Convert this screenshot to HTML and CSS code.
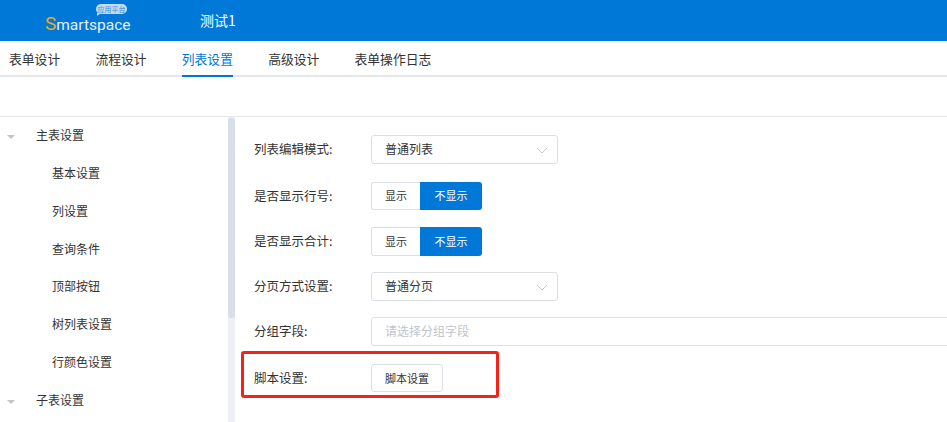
FILE: index.html
```html
<!DOCTYPE html>
<html>
<head>
    <title>Smartspace</title>
    <meta charset="UTF-8">
    <link rel="stylesheet" href="styles.css">
</head>
<body>
    <div class="header">
        <div class="logo">
            <span class="logo-text"><span class="logo-s">S</span>martspace</span>
            <span class="logo-badge">应用平台</span>
        </div>
        <div class="app-name">测试1</div>
    </div>

    <div class="tabs">
        <div class="tab">表单设计</div>
        <div class="tab">流程设计</div>
        <div class="tab active">列表设置</div>
        <div class="tab">高级设计</div>
        <div class="tab">表单操作日志</div>
    </div>

    <div class="toolbar"></div>

    <div class="main">
        <div class="sidebar">
            <div class="tree">
                <div class="tree-group"><span class="caret"></span>主表设置</div>
                <div class="tree-item">基本设置</div>
                <div class="tree-item">列设置</div>
                <div class="tree-item">查询条件</div>
                <div class="tree-item">顶部按钮</div>
                <div class="tree-item">树列表设置</div>
                <div class="tree-item">行颜色设置</div>
                <div class="tree-group"><span class="caret"></span>子表设置</div>
            </div>
            <div class="scrollbar"><div class="scrollbar-thumb"></div></div>
        </div>

        <div class="form">
            <div class="form-row gap-lg">
                <label class="form-label">列表编辑模式:</label>
                <div class="select">普通列表
                    <svg class="select-arrow" width="12" height="7" viewBox="0 0 12 7"><path d="M1 1l5 5 5-5" fill="none" stroke="#c4c9d2" stroke-width="1"/></svg>
                </div>
            </div>
            <div class="form-row gap-md">
                <label class="form-label">是否显示行号:</label>
                <div class="toggle">
                    <button class="toggle-btn">显示</button>
                    <button class="toggle-btn on">不显示</button>
                </div>
            </div>
            <div class="form-row">
                <label class="form-label">是否显示合计:</label>
                <div class="toggle tall">
                    <button class="toggle-btn">显示</button>
                    <button class="toggle-btn on">不显示</button>
                </div>
            </div>
            <div class="form-row">
                <label class="form-label">分页方式设置:</label>
                <div class="select">普通分页
                    <svg class="select-arrow" width="12" height="7" viewBox="0 0 12 7"><path d="M1 1l5 5 5-5" fill="none" stroke="#c4c9d2" stroke-width="1"/></svg>
                </div>
            </div>
            <div class="form-row gap-lg">
                <label class="form-label">分组字段:</label>
                <div class="text-input">请选择分组字段</div>
            </div>
            <div class="form-row">
                <label class="form-label">脚本设置:</label>
                <button class="plain-btn">脚本设置</button>
            </div>
            <div class="highlight"></div>
        </div>
    </div>
</body>
</html>
```

FILE: styles.css
```css
* {
    box-sizing: border-box;
}

html,
body {
    height: 100%;
}

body {
    margin: 0;
    overflow: hidden;
    background-color: #fff;
    color: #333;
    font-family: "Noto Sans CJK SC", "Noto Sans", sans-serif;
    font-size: 12px;
}

/* Header */
.header {
    display: flex;
    align-items: center;
    height: 41px;
    background-color: #0078d7;
    color: #fff;
}

.logo {
    position: relative;
    width: 200px;
    height: 41px;
    padding: 14px 0 0 45px;
}

.logo-text {
    display: block;
    color: #e6f1fb;
    font-family: Roboto, sans-serif;
    font-size: 15.5px;
    line-height: 19px;
}

.logo-s {
    color: #e8ac1c;
    font-size: 19px;
}

.logo-badge {
    position: absolute;
    top: 4px;
    left: 96px;
    width: 31px;
    height: 10px;
    border-radius: 5px;
    background-color: #c4dcf3;
    color: #3f8dd8;
    font-size: 7px;
    line-height: 10px;
    text-align: center;
}

/* little tail under the badge */
.logo-badge::after {
    content: "";
    position: absolute;
    top: 9px;
    left: 1px;
    border-style: solid;
    border-width: 3px 4px 0 0;
    border-color: #c4dcf3 transparent transparent;
}

.app-name {
    margin-top: -1px;
    font-size: 14px;
}

/* Tabs */
.tabs {
    display: flex;
    height: 36px;
    padding-left: 9px;
    border-bottom: 2px solid #e4e7ed;
}

.tab {
    height: 36px;
    margin-right: 35.2px;
    font-size: 12.8px;
    line-height: 35px;
    color: #333;
}

.tab.active {
    color: #0078d7;
    border-bottom: 2px solid #0078d7;
}

.toolbar {
    height: 40px;
    border-bottom: 1px solid #e4e7ed;
}

/* Main */
.main {
    display: flex;
    height: 305px;
}

.sidebar {
    display: flex;
    flex-shrink: 0;
    width: 235px;
}

.tree {
    flex: 1;
}

.tree-group {
    position: relative;
    height: 38px;
    padding-left: 36px;
    line-height: 36px;
}

.tree-item {
    height: 37.8px;
    padding-left: 52px;
    line-height: 36px;
}

.caret {
    position: absolute;
    top: 18px;
    left: 7px;
    border-style: solid;
    border-width: 4px 4px 0;
    border-color: #c0c4cc transparent transparent;
}

.scrollbar {
    width: 7px;
    background-color: #eef0f5;
}

.scrollbar-thumb {
    height: 200px;
    margin-top: 1px;
    border-radius: 3px;
    background-color: #d9dee9;
}

/* Form */
.form {
    position: relative;
    flex: 1;
    padding: 18px 0 0 19px;
}

.form-row {
    display: flex;
    align-items: center;
    height: 29px;
    margin-bottom: 16px;
}

.form-row.gap-md {
    margin-bottom: 16.5px;
}

.form-row.gap-lg {
    margin-bottom: 17.5px;
}

.form-label {
    flex-shrink: 0;
    width: 117px;
    margin-top: -2px;
    font-size: 12.5px;
}

.select {
    position: relative;
    width: 187px;
    height: 29px;
    padding-left: 13px;
    border: 1px solid #dcdfe6;
    border-radius: 3px;
    line-height: 25px;
}

.select-arrow {
    position: absolute;
    top: 11px;
    right: 9px;
}

.toggle {
    display: flex;
    height: 28px;
}

.toggle.tall {
    height: 29px;
}

.toggle-btn {
    width: 49px;
    height: 100%;
    padding: 0 0 2px;
    border: 1px solid #dcdfe6;
    border-right: none;
    border-radius: 3px 0 0 3px;
    background-color: #fff;
    color: #333;
    font-family: inherit;
    font-size: 11px;
}

.toggle-btn.on {
    width: 62px;
    border: none;
    border-radius: 0 3px 3px 0;
    background-color: #0078d7;
    color: #fff;
}

.text-input {
    flex: 1;
    height: 29px;
    margin-right: -4px;
    padding-left: 13px;
    border: 1px solid #dcdfe6;
    border-radius: 3px;
    color: #c0c4cc;
    line-height: 25px;
}

.plain-btn {
    width: 72px;
    height: 28px;
    padding: 0 0 1px;
    border: 1px solid #dcdfe6;
    border-radius: 3px;
    background-color: #fff;
    color: #333;
    font-family: inherit;
    font-size: 11px;
}

/* Red annotation box drawn over the form */
.highlight {
    position: absolute;
    top: 234px;
    left: 6px;
    width: 258px;
    height: 47px;
    border: 3px solid #f5221b;
    border-radius: 3px;
}
```
